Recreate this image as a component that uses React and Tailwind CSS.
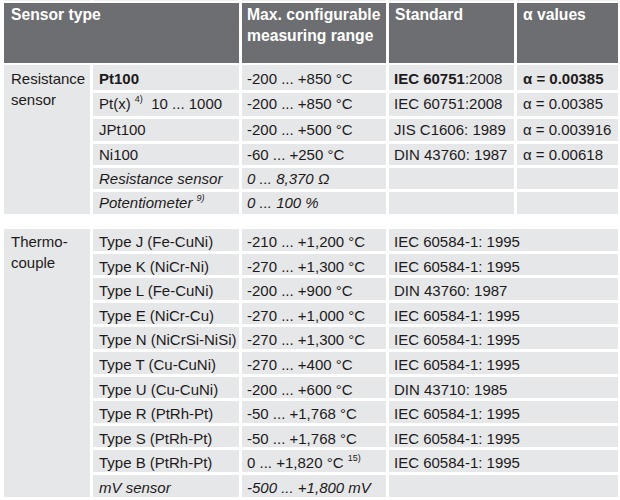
import React from 'react';

const cols = 'grid grid-cols-[86px_146px_144px_125px_101px] gap-x-[3px]';
const cell = 'bg-[#e6e7e8] px-[5px] leading-[21px] whitespace-nowrap';

const Sup = ({ children }) => (
    <sup className="relative top-[-1px] text-[9px] leading-none align-super">{children}</sup>
);

const resistanceRows = [
    {
        type: <span className="font-bold">Pt100</span>,
        range: '-200 ... +850 °C',
        std: <><span className="font-bold">IEC 60751</span>:2008</>,
        alpha: <span className="font-bold">α = 0.00385</span>,
        pad: 'pt-[3px]'
    },
    {
        type: <>Pt(x) <Sup>4)</Sup>&nbsp; 10 ... 1000</>,
        range: '-200 ... +850 °C',
        std: 'IEC 60751:2008',
        alpha: 'α = 0.00385',
        pad: 'pt-0'
    },
    { type: 'JPt100', range: '-200 ... +500 °C', std: 'JIS C1606: 1989', alpha: 'α = 0.003916', pad: 'pt-0' },
    { type: 'Ni100', range: '-60 ... +250 °C', std: 'DIN 43760: 1987', alpha: 'α = 0.00618', pad: 'pt-0' },
    { type: 'Resistance sensor', range: '0 ... 8,370 Ω', std: '', alpha: '', italic: true, pad: 'pt-0' },
    { type: <>Potentiometer <Sup>9)</Sup></>, range: '0 ... 100 %', std: '', alpha: '', italic: true, pad: 'pt-0' }
];

const thermoRows = [
    { type: 'Type J (Fe-CuNi)', range: '-210 ... +1,200 °C', std: 'IEC 60584-1: 1995' },
    { type: 'Type K (NiCr-Ni)', range: '-270 ... +1,300 °C', std: 'IEC 60584-1: 1995' },
    { type: 'Type L (Fe-CuNi)', range: '-200 ... +900 °C', std: 'DIN 43760: 1987' },
    { type: 'Type E (NiCr-Cu)', range: '-270 ... +1,000 °C', std: 'IEC 60584-1: 1995' },
    { type: 'Type N (NiCrSi-NiSi)', range: '-270 ... +1,300 °C', std: 'IEC 60584-1: 1995' },
    { type: 'Type T (Cu-CuNi)', range: '-270 ... +400 °C', std: 'IEC 60584-1: 1995' },
    { type: 'Type U (Cu-CuNi)', range: '-200 ... +600 °C', std: 'DIN 43710: 1985' },
    { type: 'Type R (PtRh-Pt)', range: '-50 ... +1,768 °C', std: 'IEC 60584-1: 1995' },
    { type: 'Type S (PtRh-Pt)', range: '-50 ... +1,768 °C', std: 'IEC 60584-1: 1995' },
    { type: 'Type B (PtRh-Pt)', range: <>0 ... +1,820 °C <Sup>15)</Sup></>, std: 'IEC 60584-1: 1995' },
    { type: 'mV sensor', range: '-500 ... +1,800 mV', std: '', italic: true }
];

export default function App() {
    return (
        <div
            className="w-[620px] h-[500px] bg-white pl-[4px] text-[15px] text-[#1d1a1b] overflow-hidden"
            style={{ fontFamily: '"Liberation Sans", Arial, sans-serif' }}
        >
            {/* faint edge of the previous block */}
            <div className={`${cols} h-[1px]`}>
                <div className="bg-[#f0f0f1]" />
                <div className="bg-[#f0f0f1]" />
                <div className="bg-[#f0f0f1]" />
                <div className="bg-[#f0f0f1]" />
                <div className="bg-[#f0f0f1]" />
            </div>

            {/* header */}
            <div className={`${cols} mt-[2px] h-[60px] text-white font-bold text-[15.7px] leading-[21px]`}>
                <div className="col-span-2 bg-[#6d6e71] pl-[7px] pt-px">Sensor type</div>
                <div className="bg-[#6d6e71] pl-[5px] pt-px">Max. configurable<br />measuring range</div>
                <div className="bg-[#6d6e71] pl-[6px] pt-px">Standard</div>
                <div className="bg-[#6d6e71] pl-[6px] pt-px">α values</div>
            </div>

            {/* resistance */}
            <div className={`${cols} gap-y-[3px] mt-[2px] grid-rows-[25px_23px_22px_21px_21px_22px]`}>
                <div className={`${cell} row-span-6 pl-[7px] pt-[3px]`}>Resistance<br />sensor</div>
                {resistanceRows.map((r, i) => (
                    <React.Fragment key={i}>
                        <div className={`${cell} ${r.pad} pl-[6px] ${r.italic ? 'italic' : ''}`}>{r.type}</div>
                        <div className={`${cell} ${r.pad} ${r.italic ? 'italic' : ''}`}>{r.range}</div>
                        <div className={`${cell} ${r.pad}`}>{r.std}</div>
                        <div className={`${cell} ${r.pad} pl-[6px]`}>{r.alpha}</div>
                    </React.Fragment>
                ))}
            </div>

            {/* thermocouple */}
            <div className={`${cols} gap-y-[3px] mt-[15px] grid-rows-[repeat(11,21.6px)]`}>
                <div className={`${cell} row-span-11 pl-[7px] pt-[2px]`}>Thermo-<br />couple</div>
                {thermoRows.map((r, i) => (
                    <React.Fragment key={i}>
                        <div className={`${cell} pt-[2px] pl-[6px] ${r.italic ? 'italic' : ''}`}>{r.type}</div>
                        <div className={`${cell} pt-[2px] ${r.italic ? 'italic' : ''}`}>{r.range}</div>
                        <div className={`${cell} pt-[2px] col-span-2`}>{r.std}</div>
                    </React.Fragment>
                ))}
            </div>
        </div>
    );
}
